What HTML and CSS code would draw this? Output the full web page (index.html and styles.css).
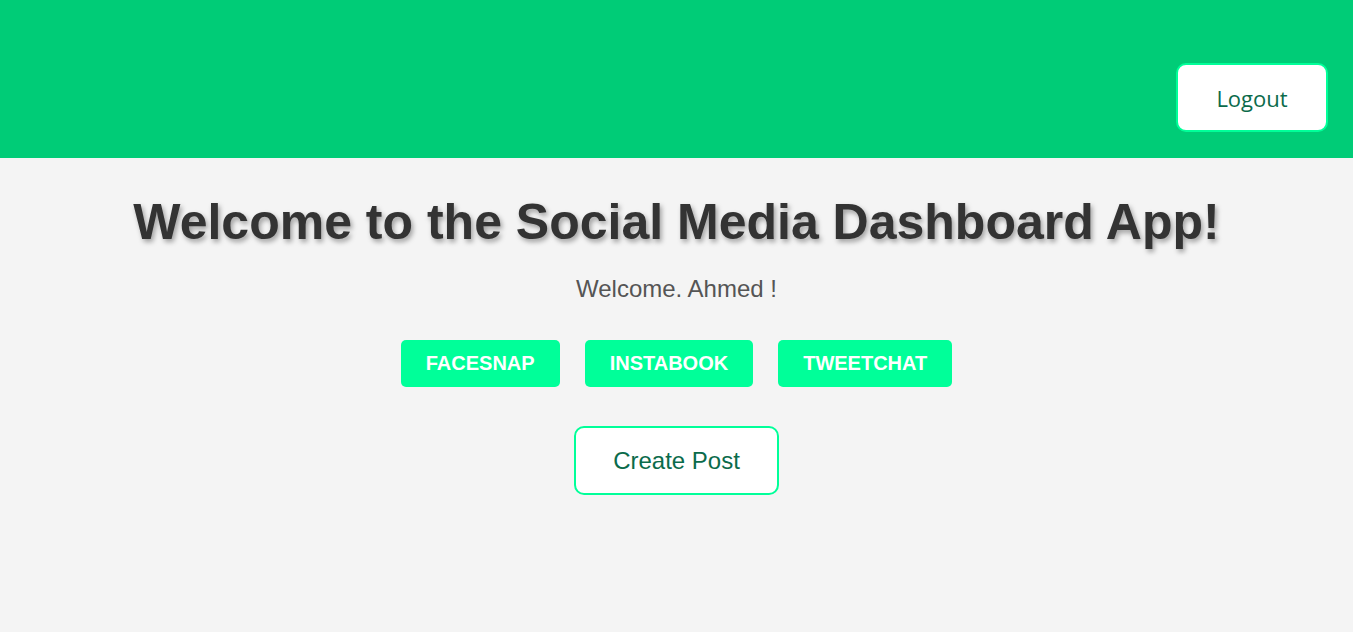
FILE: index.html
```html
<!DOCTYPE html>
<html>
<head>
<meta charset="utf-8">
<link rel="stylesheet" href="styles.css">
</head>
<body>
<header class="topbar">
  <button class="logout">Logout</button>
</header>
<main class="content">
  <h1 class="title">Welcome to the Social Media Dashboard App!</h1>
  <p class="greeting">Welcome. Ahmed !</p>
  <div class="platforms">
    <button class="platform">Facesnap</button>
    <button class="platform">Instabook</button>
    <button class="platform">Tweetchat</button>
  </div>
  <button class="create">Create Post</button>
</main>
</body>
</html>
```
FILE: styles.css
```css
html, body {
  margin: 0;
  padding: 0;
  background: #f4f4f4;
  font-family: "Liberation Sans", Arial, sans-serif;
}
.topbar {
  height: 158px;
  background: #00cc77;
  display: flex;
  justify-content: flex-end;
  align-items: flex-start;
  box-sizing: border-box;
  padding: 63px 25px 0 0;
}
.logout {
  width: 152px;
  height: 69px;
  background: #ffffff;
  border: 2px solid #00ff99;
  border-radius: 10px;
  color: #0b6b4b;
  font-family: "Open Sans", "Noto Sans", sans-serif;
  font-size: 22px;
  cursor: pointer;
}
.content {
  display: flex;
  flex-direction: column;
  align-items: center;
}
.title {
  margin: 34px 0 0;
  font-size: 50px;
  font-weight: bold;
  color: #333333;
  text-shadow: 2px 3px 5px rgba(0,0,0,0.35);
  line-height: 60px;
}
.greeting {
  margin: 23px 0 0;
  font-size: 24px;
  color: #555555;
  line-height: 28px;
}
.platforms {
  display: flex;
  gap: 25px;
  margin-top: 37px;
}
.platform {
  height: 47px;
  padding: 0 25px;
  background: #00ff99;
  border: none;
  border-radius: 5px;
  color: #ffffff;
  font-family: "Liberation Sans", Arial, sans-serif;
  font-size: 20px;
  font-weight: bold;
  text-transform: uppercase;
  cursor: pointer;
}
.create {
  margin-top: 39px;
  width: 205px;
  height: 69px;
  background: #ffffff;
  border: 2px solid #00ff99;
  border-radius: 10px;
  color: #0b6b4b;
  font-family: "Liberation Sans", Arial, sans-serif;
  font-size: 24px;
  cursor: pointer;
}
```
